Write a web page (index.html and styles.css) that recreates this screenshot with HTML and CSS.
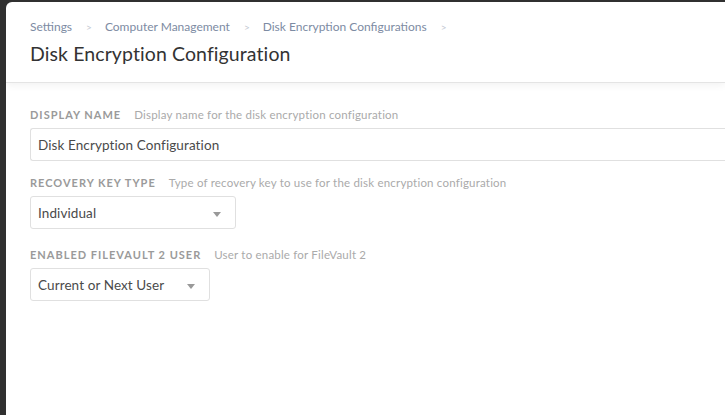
FILE: index.html
```html
<!DOCTYPE html>
<html>
<head>
<meta charset="utf-8">
<link rel="stylesheet" href="styles.css">
</head>
<body>
<div class="window">
  <header class="header">
    <nav class="crumbs">
      <span class="crumb">Settings</span><span class="sep">&gt;</span>
      <span class="crumb">Computer Management</span><span class="sep">&gt;</span>
      <span class="crumb">Disk Encryption Configurations</span><span class="sep">&gt;</span>
    </nav>
    <h1 class="title">Disk Encryption Configuration</h1>
  </header>
  <main class="content">
    <div class="field first">
      <div class="label"><span class="name">Display Name</span><span class="help">Display name for the disk encryption configuration</span></div>
      <div class="input wide">Disk Encryption Configuration</div>
    </div>
    <div class="field second">
      <div class="label"><span class="name">Recovery Key Type</span><span class="help">Type of recovery key to use for the disk encryption configuration</span></div>
      <div class="input select key">Individual<span class="caret"></span></div>
    </div>
    <div class="field">
      <div class="label"><span class="name">Enabled FileVault 2 User</span><span class="help">User to enable for FileVault 2</span></div>
      <div class="input select user">Current or Next User<span class="caret"></span></div>
    </div>
  </main>
</div>
</body>
</html>
```
FILE: styles.css
```css
html, body {
  margin: 0;
  padding: 0;
  background: #303030;
  overflow: hidden;
}
body {
  font-family: Lato, "Open Sans", sans-serif;
  padding: 2px 0 0 6px;
  height: 415px;
  box-sizing: border-box;
}
.window {
  background: #fff;
  border-top-left-radius: 6px;
  height: 413px;
  overflow: hidden;
}
.header {
  height: 81px;
  box-sizing: border-box;
  padding: 17px 24px 0;
  border-bottom: 1px solid #e4e4e4;
  box-shadow: 0 2px 8px rgba(0,0,0,0.06);
  position: relative;
}
.crumbs {
  font-size: 12px;
  line-height: 16px;
  color: #7d8ba3;
  display: flex;
  align-items: center;
}
.sep {
  color: #c3c8d2;
  font-size: 10px;
  margin: 0 13px 0 14px;
}
.title {
  margin: 7px 0 0;
  font-size: 19.5px;
  letter-spacing: 0.1px;
  font-weight: 400;
  color: #333;
  line-height: 24px;
}
.content {
  padding: 24px 0 0 24px;
}
.field.first { margin-bottom: 14px; }
.field.second { margin-bottom: 18px; }
.label {
  display: flex;
  align-items: baseline;
  line-height: 16px;
  margin-bottom: 5px;
}
.name {
  text-transform: uppercase;
  font-size: 11px;
  font-weight: 700;
  letter-spacing: 1px;
  color: #9a9a9a;
  margin-right: 13px;
}
.help {
  font-size: 11.5px;
  letter-spacing: 0.2px;
  color: #aaa;
}
.input {
  height: 33px;
  box-sizing: border-box;
  border: 1px solid #e0e0e0;
  border-radius: 3px;
  padding: 0 7px;
  font-size: 13.5px;
  letter-spacing: 0.1px;
  color: #4a4a4a;
  display: flex;
  align-items: center;
  position: relative;
}
.wide {
  margin-right: -10px;
  border-right: none;
}
.key { width: 206px; }
.user { width: 180px; }
.caret {
  position: absolute;
  right: 14px;
  top: 15px;
  width: 0;
  height: 0;
  border-left: 4px solid transparent;
  border-right: 4px solid transparent;
  border-top: 5px solid #999;
}
```
